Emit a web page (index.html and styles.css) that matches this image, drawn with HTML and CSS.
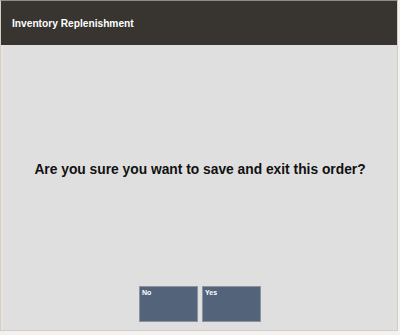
FILE: index.html
```html
<!DOCTYPE html>
<html>
<head>
<meta charset="utf-8">
<link rel="stylesheet" href="styles.css">
</head>
<body>
<div class="frame">
  <div class="header">Inventory Replenishment</div>
  <div class="content">
    <div class="message">Are you sure you want to save and exit this order?</div>
    <div class="buttons">
      <button class="btn">No</button>
      <button class="btn">Yes</button>
    </div>
  </div>
</div>
</body>
</html>
```
FILE: styles.css
```css
html, body {
  margin: 0;
  padding: 0;
  background: #f4f2f0;
}
.frame {
  width: 398px;
  height: 331px;
  box-sizing: border-box;
  border-top: 1px solid #8e8c8a;
  border-left: 1px solid #d6cdc6;
  border-right: 1px solid #d6cdc6;
  border-bottom: 1px solid #d6cdc6;
  display: flex;
  flex-direction: column;
  font-family: "Liberation Sans", Arial, sans-serif;
}
.header {
  height: 44px;
  background: #383530;
  color: #ffffff;
  font-weight: bold;
  font-size: 10.2px;
  padding-left: 11px;
  display: flex;
  align-items: center;
  box-sizing: border-box;
}
.content {
  flex: 1;
  background: #dfdfdf;
  border-left: 2px solid #e6e3e0;
  display: flex;
  flex-direction: column;
  align-items: center;
}
.message {
  margin-top: 117px;
  font-size: 13.8px;
  font-weight: bold;
  color: #111111;
}
.buttons {
  margin-top: 109px;
  display: flex;
  gap: 4px;
}
.btn {
  width: 59px;
  height: 36px;
  background: #53647a;
  border: 1px solid #8a939e;
  color: #ffffff;
  font-family: "Liberation Sans", Arial, sans-serif;
  font-weight: bold;
  font-size: 7px;
  text-align: left;
  padding: 2px 2px;
  display: flex;
  align-items: flex-start;
  margin: 0;
}
```
